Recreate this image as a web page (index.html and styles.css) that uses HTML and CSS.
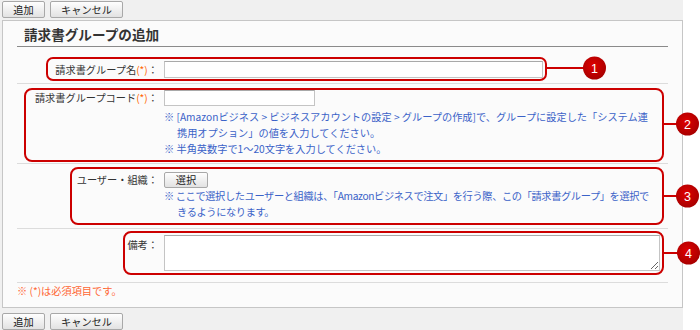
FILE: index.html
```html
<!DOCTYPE html>
<html>
<head>
<meta charset="utf-8" />
<title>請求書グループの追加</title>
<link rel="stylesheet" href="styles.css">
</head>
<body>
<div id="page">
  <div class="buttons">
    <button class="btn btn-add">追加</button><button class="btn btn-cancel">キャンセル</button>
  </div>

  <div class="panel">
    <h2 class="title">請求書グループの追加</h2>

    <div class="row row-name">
      <label>請求書グループ名<span class="req">(*)</span>：</label>
      <div class="field"><input type="text" class="text-name" /></div>
    </div>

    <div class="row row-code">
      <label>請求書グループコード<span class="req">(*)</span>：</label>
      <div class="field">
        <input type="text" class="text-code" />
        <p class="note">※ [Amazonビジネス &gt; ビジネスアカウントの設定 &gt; グループの作成]で、グループに設定した「システム連<br>携用オプション」の値を入力してください。</p>
        <p class="note">※ 半角英数字で1～20文字を入力してください。</p>
      </div>
    </div>

    <div class="row row-user">
      <label>ユーザー・組織：</label>
      <div class="field">
        <button class="btn btn-select">選択</button>
        <p class="note note-tight">※ ここで選択したユーザーと組織は、「Amazonビジネスで注文」を行う際、この「請求書グループ」を選択で<br>きるようになります。</p>
      </div>
    </div>

    <div class="row row-memo">
      <label>備考：</label>
      <div class="field"><textarea class="memo"></textarea></div>
    </div>

    <p class="required">※ (*)は必須項目です。</p>
  </div>

  <div class="buttons buttons-bottom">
    <button class="btn btn-add">追加</button><button class="btn btn-cancel">キャンセル</button>
  </div>

  <!-- annotation layer -->
  <svg class="callouts" width="700" height="330" viewBox="0 0 700 330">
    <defs>
      <radialGradient id="dot" cx="45%" cy="40%" r="60%">
        <stop offset="0" stop-color="#e00000" />
        <stop offset="1" stop-color="#a80000" />
      </radialGradient>
    </defs>
    <g fill="none" stroke="#cc0000" stroke-width="2">
      <rect x="47" y="58" width="499" height="22" rx="6" />
      <rect x="25" y="89" width="638" height="72" rx="7" />
      <rect x="71" y="168" width="592" height="56" rx="7" />
      <rect x="124" y="232" width="539" height="42" rx="7" />
      <line x1="546" y1="68" x2="584" y2="68" />
      <line x1="663" y1="124" x2="677" y2="124" />
      <line x1="663" y1="196" x2="677" y2="196" />
      <line x1="663" y1="253" x2="678" y2="253" />
    </g>
    <g fill="url(#dot)">
      <circle cx="594.5" cy="68" r="11.5" />
      <circle cx="687.5" cy="124" r="11.5" />
      <circle cx="687.5" cy="196" r="11.5" />
      <circle cx="688.5" cy="253" r="11.5" />
    </g>
    <g class="num" fill="#fff" text-anchor="middle">
      <text x="594.5" y="72.5">1</text>
      <text x="687.5" y="128.5">2</text>
      <text x="687.5" y="200.5">3</text>
      <text x="688.5" y="257.5">4</text>
    </g>
  </svg>
</div>
</body>
</html>
```

FILE: styles.css
```css
* {
  box-sizing: border-box;
}
html, body {
  margin: 0;
  background-color: #fff;
}
body {
  font-family: 'Noto Sans CJK JP', sans-serif;
  font-size: 10.2px;
  color: #333;
}
#page {
  position: relative;
  width: 683px;
  height: 330px;
  background-color: #f0f0f0;
}
.buttons {
  display: flex;
  gap: 5px;
  height: 20px;
  padding: 1px 0 0 2px;
}
.buttons-bottom {
  height: auto;
  padding-top: 5px;
}
.btn {
  height: 17px;
  padding: 0;
  font-family: inherit;
  font-size: 10.2px;
  line-height: 15px;
  color: #222;
  background: linear-gradient(#fefefe, #e2e2e2);
  border: 1px solid #a8a8a8;
  border-radius: 2px;
}
.btn-add {
  width: 43px;
}
.btn-cancel {
  width: 73px;
}
.panel {
  width: 681px;
  margin-left: 2px;
  padding: 0 14px 9px;
  background-color: #fbfbfb;
  border: 1px solid #c6c6c6;
}
.title {
  margin: 0;
  padding: 4px 0 3px 7px;
  font-size: 13.6px;
  line-height: 18px;
  font-weight: bold;
  color: #333;
  border-bottom: 1px solid #8a8a8a;
}
.row {
  display: grid;
  grid-template-columns: 147px 1fr;
  border-bottom: 1px solid #dcdcdc;
}
.row > label {
  padding-right: 6px;
  text-align: right;
  line-height: 16px;
  color: #333;
  white-space: nowrap;
}
.req {
  color: #f60;
}
.field {
  min-width: 0;
}
.note {
  margin: 0;
  padding-left: 13px;
  text-indent: -13px;
  line-height: 16px;
  color: #3a62c8;
  white-space: nowrap;
}
.note-tight {
  letter-spacing: -0.35px;
}
input[type=text], textarea {
  display: block;
  margin: 0;
  padding: 1px 3px;
  font-family: inherit;
  font-size: 10.2px;
  background-color: #fff;
  border: 1px solid #c4c4c4;
  border-top-color: #a9a9a9;
  border-radius: 0;
}

.row-name {
  padding: 14px 0 5px;
}
.row-name > label {
  align-self: center;
}
.text-name {
  width: 379px;
  height: 17px;
}

.row-code {
  padding: 6px 0;
}
.text-code {
  width: 151px;
  height: 16px;
  margin-bottom: 3px !important;
}

.row-user {
  padding: 8px 0;
}
.btn-select {
  display: block;
  width: 44px;
  height: 16px;
  line-height: 14px;
}

.row-memo {
  padding: 6px 0 11px;
}
.row-memo > label {
  margin-top: 2px;
}
.memo {
  width: 496px;
  height: 36px;
  resize: both;
}

.required {
  margin: 0;
  line-height: 15px;
  color: #f63;
}

.callouts {
  position: absolute;
  top: 0;
  left: 0;
  overflow: visible;
  pointer-events: none;
}
.num {
  font-family: 'Liberation Sans', sans-serif;
  font-size: 12.5px;
}
```
